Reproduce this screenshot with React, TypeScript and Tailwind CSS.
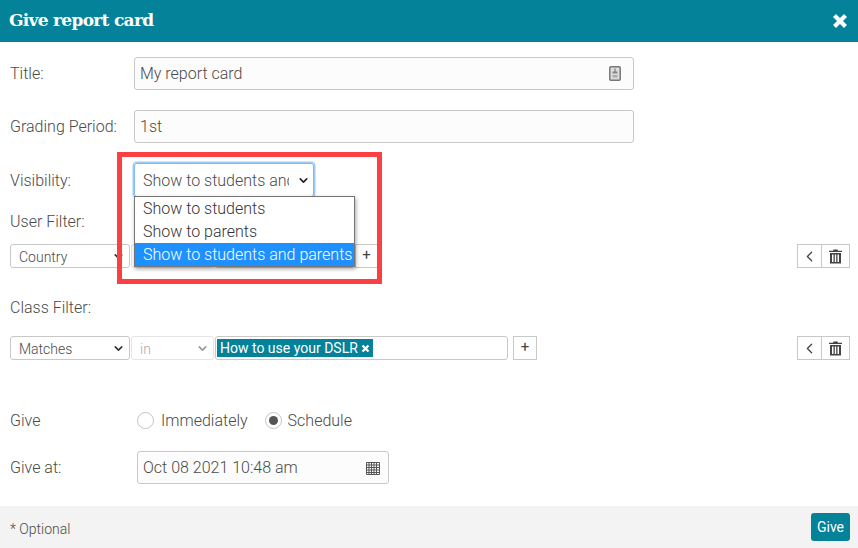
import { ChevronDown, ChevronLeft } from 'lucide-react';

const Caret = ({ className = 'text-[#333]' }: { className?: string }) => (
  <ChevronDown size={13} strokeWidth={3} className={className} />
);

const SideButtons = () => (
  <div className="ml-auto flex h-6 w-[53px] border border-[#c8c8c8] bg-white text-[#444]">
    <div className="flex w-6 items-center justify-center border-r border-[#c8c8c8]">
      <ChevronLeft size={17} strokeWidth={1.8} />
    </div>
    <div className="flex flex-1 items-center justify-center">
      <svg width="15" height="15" viewBox="0 0 15 15" fill="#444">
        <path d="M5.5 0.5h4l.5 1.2h4v1.3H1V1.700h4z" />
        <path d="M2 4h11v10.500H2zM4 5.500v7.500h1.500V5.500zM6.800 5.500v7.500h1.400V5.500zM9.500 5.500v7.500H11V5.500z" fillRule="evenodd" />
      </svg>
    </div>
  </div>
);

const App = () => {
  return (
    <div className="relative flex h-[548px] w-[858px] flex-col overflow-hidden bg-white font-['Roboto',sans-serif] text-base font-light text-[#4a4a4a]">
      <header className="flex h-[42px] shrink-0 items-center justify-between bg-[#038299] pl-[9px] pr-[10px] text-white">
        <h1 className="font-['DejaVu_Serif',serif] text-[17px] font-bold tracking-[-0.7px]">Give report card</h1>
        <svg width="16" height="16" viewBox="0 0 16 16" fill="none" stroke="white" strokeWidth="4.200">
          <path d="M2.500 2.500l11 11M13.500 2.500l-11 11" />
        </svg>
      </header>

      <main className="flex flex-1 flex-col pt-[15px]">
        <div className="flex h-[33px] items-center pl-[10px]">
          <label className="w-[124px]">Title:</label>
          <div className="flex h-[33px] w-[500px] items-center justify-between rounded-[3px] border border-[#c8c8c8] bg-[#fcfcfc] pl-[5px] pr-[12px]">
            <span>My report card</span>
            <svg width="12" height="15" viewBox="0 0 12 15">
              <rect x="0.800" y="0.800" width="10.400" height="13.400" rx="1" fill="#ddd" stroke="#777" strokeWidth="1.500" />
              <path d="M5.300 2.500h1.400v3H8.500v2h-5v-2h1.800z" fill="#888" />
              <path d="M3.500 9h5v2.500h-5z" fill="#aaa" />
            </svg>
          </div>
        </div>

        <div className="mt-5 flex h-[33px] items-center pl-[10px]">
          <label className="w-[124px]">Grading Period:</label>
          <div className="flex h-[33px] w-[500px] items-center rounded-[3px] border border-[#c8c8c8] bg-[#fcfcfc] pl-[5px]">1st</div>
        </div>

        <div className="mt-5 flex h-[34px] items-center pl-[10px]">
          <label className="w-[124px] pt-px">Visibility:</label>
          <div className="flex h-[34px] w-[180px] items-center rounded-[3px] border border-[#7db9ee] pl-2 shadow-[0_0_0_1.500px_#9ccdf8]">
            <span className="w-[146px] shrink-0 overflow-hidden whitespace-nowrap pt-px">Show to students and parents</span>
            <span className="ml-1 flex w-[20px] shrink-0 justify-center"><Caret className="text-[#222]" /></span>
          </div>
        </div>

        <div className="mt-4 pl-[10px] leading-[18px]">User Filter:</div>

        <div className="mt-[13px] flex h-6 items-center pl-[10px] pr-2 text-sm">
          <div className="flex h-6 w-[120px] items-center justify-between rounded-[3px] border border-[#c8c8c8] pl-2 pr-1">
            <span className="pt-px">Country</span>
            <Caret />
          </div>
          <div className="ml-px h-6 w-[83px] rounded-[3px] border border-[#e4e4e4]" />
          <div className="ml-px h-6 w-[140px] rounded-[3px] border border-[#c8c8c8]" />
          <div className="flex h-6 w-[23px] items-center justify-center border border-[#c8c8c8] text-[15px] font-normal text-[#444]">+</div>
          <div className="ml-auto"><SideButtons /></div>
        </div>

        <div className="mt-[31px] pl-[10px] leading-[18px]">Class Filter:</div>

        <div className="mt-[19px] flex h-6 items-center pl-[10px] pr-2 text-sm">
          <div className="flex h-6 w-[120px] items-center justify-between rounded-[3px] border border-[#c8c8c8] pl-2 pr-1">
            <span className="pt-px">Matches</span>
            <Caret />
          </div>
          <div className="ml-px flex h-6 w-[83px] items-center justify-between rounded-[3px] border border-[#e4e4e4] pl-2 pr-1 text-[#aaa]">
            <span className="pt-px">in</span>
            <Caret className="text-[#999]" />
          </div>
          <div className="ml-px flex h-6 w-[293px] items-center rounded-[3px] border border-[#c8c8c8] pl-px">
            <span className="flex h-[18px] items-center gap-[3px] bg-[#038299] px-[3px] text-sm font-normal leading-none text-white">
              How to use your DSLR
              <svg width="9" height="9" viewBox="0 0 9 9" fill="none" stroke="white" strokeWidth="2.200">
                <path d="M1.500 1.500l6 6M7.500 1.500l-6 6" />
              </svg>
            </span>
          </div>
          <div className="ml-[5px] flex h-6 w-[24px] items-center justify-center border border-[#c8c8c8] text-[15px] font-normal text-[#444]">+</div>
          <div className="ml-auto"><SideButtons /></div>
        </div>

        <div className="mt-[49px] flex h-[22px] items-center pl-[10px]">
          <label className="w-[127px] pt-px">Give</label>
          <span className="h-[17px] w-[17px] rounded-full border border-[#c4c4c4] bg-white" />
          <span className="ml-[7px] pt-px">Immediately</span>
          <span className="ml-[17px] flex h-[17px] w-[17px] items-center justify-center rounded-full border border-[#c4c4c4] bg-white">
            <span className="h-[9px] w-[9px] rounded-full bg-[#555]" />
          </span>
          <span className="ml-[6px] pt-px">Schedule</span>
        </div>

        <div className="mt-[20px] flex h-[33px] items-center pl-[10px]">
          <label className="w-[127px]">Give at:</label>
          <div className="flex h-[33px] w-[252px] items-center justify-between rounded-[3px] border border-[#c8c8c8] bg-[#fcfcfc] pl-[5px] pr-2">
            <span>Oct 08 2021 10:48 am</span>
            <svg width="14" height="14" viewBox="0 0 14 14" fill="none" stroke="#555" strokeWidth="1">
              <path d="M.500 1.500h13v12H.500zM.500 4h13M.500 6.500h13M.500 9h13M.500 11.500h13M3 1.500v12M5.500 1.500v12M8 1.500v12M10.500 1.500v12" />
            </svg>
          </div>
        </div>
      </main>

      <footer className="flex h-[42px] shrink-0 items-center justify-between bg-[#f3f3f3] pl-[10px] pr-2 text-sm">
        <span className="mt-[4px]">* Optional</span>
        <button className="flex h-[28px] w-[39px] items-center justify-center rounded-[3px] bg-[#038299] text-sm font-normal text-white">Give</button>
      </footer>

      {/* red annotation box */}
      <div className="pointer-events-none absolute left-[117px] top-[152px] z-10 h-[132px] w-[265px] border-[5px] border-[#fb4044]" />

      {/* open native select list */}
      <div className="absolute left-[134px] top-[196px] flex w-[221px] flex-col border border-[#767676] bg-white font-['Roboto',sans-serif] text-base font-light leading-[23px] text-[#333] shadow-[1px_2px_4px_rgba(0,0,0,0.35)]">
        <div className="pl-2">Show to students</div>
        <div className="pl-2">Show to parents</div>
        <div className="whitespace-nowrap bg-[#1e90ff] pl-2 text-white">Show to students and parents</div>
      </div>
    </div>
  );
};

export default App;
